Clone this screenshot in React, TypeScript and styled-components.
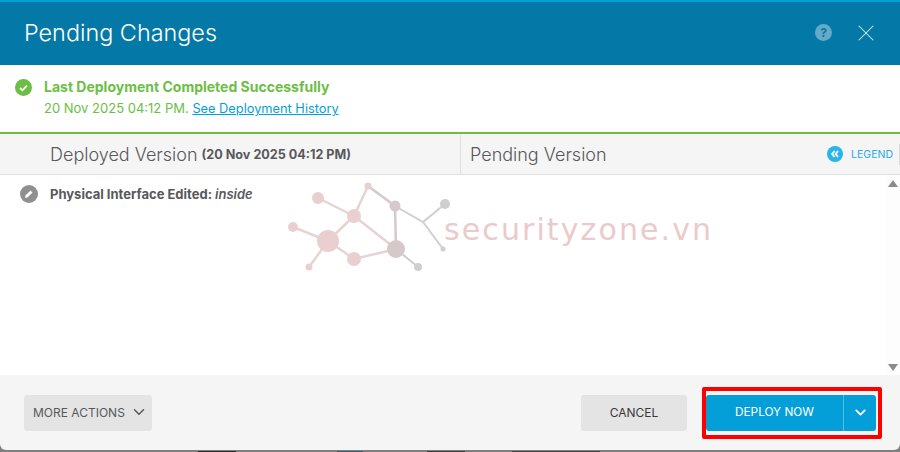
import React from 'react';
import styled, { createGlobalStyle } from 'styled-components';
import { ChevronDown, X } from 'lucide-react';

const Global = createGlobalStyle`
  html, body {
    margin: 0;
    padding: 0;
    background: #fff;
    overflow: hidden;
  }
`;

const Modal = styled.div`
  width: 900px;
  height: 452px;
  display: flex;
  flex-direction: column;
  font-family: Inter, "Liberation Sans", sans-serif;
  background: #7f7f7f;
  overflow: hidden;
`;

const Header = styled.header`
  height: 65px;
  flex: none;
  box-sizing: border-box;
  border-top: 2px solid #049fd9;
  background: #0479a8;
  display: flex;
  align-items: center;
  padding: 0 20px 2px 24px;
  color: #fff;
`;

const Title = styled.h1`
  flex: 1;
  margin: 0;
  font-size: 23.4px;
  font-weight: 300;
`;

const HelpIcon = styled.span`
  width: 17px;
  height: 17px;
  border-radius: 50%;
  background: #66a9c9;
  color: #0479a8;
  font-size: 12px;
  font-weight: 700;
  display: flex;
  align-items: center;
  justify-content: center;
  margin-right: 20px;
`;

const Status = styled.section`
  height: 69px;
  flex: none;
  box-sizing: border-box;
  padding: 12px 0 0 15px;
  display: flex;
  gap: 12px;
  background: #fff;
  border-bottom: 2px solid #6cbe45;
`;

const StatusIcon = styled.svg`
  margin-top: 2px;
  flex: none;
`;

const StatusText = styled.div`
  color: #6cbe45;
  font-size: 13px;
  line-height: 20px;
`;

const StatusTitle = styled.div`
  font-size: 14px;
  font-weight: 700;
  margin-bottom: 1px;
`;

const HistoryLink = styled.a`
  color: #049fd9;
  font-size: 12.8px;
  text-decoration: underline;
`;

const Versions = styled.div`
  height: 41px;
  flex: none;
  box-sizing: border-box;
  display: flex;
  background: #f5f5f5;
  border-bottom: 1px solid #dfdfdf;
  color: #58585b;
`;

const VersionCell = styled.div<{ $width: number; $pad: number }>`
  width: ${({ $width }) => $width}px;
  box-sizing: border-box;
  padding-left: ${({ $pad }) => $pad}px;
  display: flex;
  align-items: center;
  gap: 4px;
  font-size: 18px;
  font-weight: 300;
`;

const VersionDate = styled.span`
  font-size: 12.6px;
  font-weight: 700;
`;

const PendingCell = styled(VersionCell)`
  flex: 1;
  border-left: 1px solid #dfdfdf;
`;

const LegendToggle = styled.span`
  margin-left: auto;
  display: flex;
  align-items: center;
  gap: 8px;
  height: 21px;
  padding-right: 6px;
  border-right: 1px solid #dcdcdc;
  color: #29abe2;
  font-size: 10.5px;
  font-weight: 400;
`;

const LegendDot = styled.span`
  width: 16px;
  height: 16px;
  border-radius: 50%;
  background: #29b5e8;
  display: flex;
  align-items: center;
  justify-content: center;
`;

const Content = styled.main`
  position: relative;
  flex: 1;
  display: flex;
  background: #fff;
`;

const ChangeList = styled.div`
  flex: 1;
  padding: 10px 0 0 20px;
`;

const ChangeRow = styled.div`
  display: flex;
  align-items: center;
  gap: 12px;
  color: #58585b;
  font-size: 13px;
  font-weight: 700;
`;

const ChangeName = styled.em`
  font-weight: 600;
`;

const Scrollbar = styled.div`
  width: 15px;
  background: #fdfdfd;
  display: flex;
  flex-direction: column;
  justify-content: space-between;
  align-items: center;
  padding: 5px 0 4px;
`;

const Watermark = styled.div`
  position: absolute;
  left: 285px;
  top: 5px;
  display: flex;
  align-items: center;
  pointer-events: none;
`;

const WatermarkText = styled.span`
  margin: -2px 0 0 -11px;
  color: #ebcacb;
  font-family: "DejaVu Sans", sans-serif;
  font-size: 30px;
  letter-spacing: 2.1px;
`;

const Footer = styled.footer`
  height: 75px;
  flex: none;
  box-sizing: border-box;
  background: #f5f5f5;
  border-radius: 0 0 6px 6px;
  display: flex;
  align-items: flex-start;
  padding: 20px 24px 0;
  gap: 15px;
`;

const Button = styled.button`
  height: 36px;
  border: none;
  border-radius: 3px;
  background: #e4e4e4;
  color: #58585b;
  font-family: inherit;
  font-size: 12px;
  display: flex;
  align-items: center;
  justify-content: center;
  padding: 0 0 2px;
`;

const MoreButton = styled(Button)`
  width: 128px;
  gap: 5px;
  justify-content: flex-start;
  padding-left: 9px;
  margin-right: auto;
`;

const CancelButton = styled(Button)`
  width: 106px;
  color: #39393b;
`;

const Highlight = styled.div`
  display: flex;
  margin: -8px -6px 0 0;
  padding: 4px 2px 4px 0;
  border: 4px solid #ff0000;
  border-radius: 2px;
`;

const DeployButton = styled(Button)`
  width: 137px;
  background: #049fd9;
  color: #fff;
  font-size: 11.8px;
  border-radius: 3px 0 0 3px;
`;

const DeployCaret = styled(Button)`
  width: 33px;
  background: #049fd9;
  color: #fff;
  border-left: 1px solid #4fbde6;
  border-radius: 0 3px 3px 0;
`;

// the page behind the dialog, only its last pixels show under the footer
const PageEdge = styled.div`
  height: 2px;
  flex: none;
  display: flex;
  align-items: flex-end;
`;

const PageSliver = styled.span<{ $left: number; $width: number; $color: string }>`
  margin-left: ${({ $left }) => $left}px;
  width: ${({ $width }) => $width}px;
  height: 1px;
  background: ${({ $color }) => $color};
`;

const Triangle = ({ down }: { down?: boolean }) => (
  <svg width="10" height="7" viewBox="0 0 10 7">
    <path d={down ? 'M0 0h10L5 7z' : 'M0 7h10L5 0z'} fill="#8a8a8a" />
  </svg>
);

const NetworkMark = () => {
  const pink = '#e9cfd0';
  const pinkLine = '#e6d3d3';
  const grey = '#cfcfcf';
  const mid = '#d5c9ca';
  return (
    <svg width="170" height="100" viewBox="0 0 170 100">
      <g stroke={pinkLine} strokeWidth="2.5" fill="none">
        <path d="M33 18L69 36" />
        <path d="M8 47L43 61" />
        <path d="M43 61L69 36L83 6" />
        <path d="M43 61L24 87" />
        <path d="M43 61L69 79L111 69" />
        <path d="M69 36L111 69" />
      </g>
      <g stroke={mid} strokeWidth="2.5" fill="none">
        <path d="M83 6L110 26L111 69" />
      </g>
      <g stroke={grey} strokeWidth="2" fill="none">
        <path d="M110 26L138 42L160 24" />
        <path d="M138 42L158 69" />
        <path d="M111 69L133 87" />
      </g>
      <g fill={pink}>
        <circle cx="33" cy="18" r="6" />
        <circle cx="8" cy="47" r="5" />
        <circle cx="43" cy="61" r="11" />
        <circle cx="24" cy="87" r="3.5" />
        <circle cx="69" cy="36" r="7" />
        <circle cx="69" cy="79" r="7" />
        <circle cx="83" cy="6" r="3.5" />
      </g>
      <g fill={mid}>
        <circle cx="110" cy="26" r="5.5" />
        <circle cx="111" cy="69" r="9" />
      </g>
      <g fill={grey}>
        <circle cx="133" cy="87" r="4" />
        <circle cx="160" cy="24" r="5" />
        <circle cx="158" cy="69" r="2.5" />
      </g>
    </svg>
  );
};

const App = () => (
  <>
    <Global />
    <Modal>
      <Header>
        <Title>Pending Changes</Title>
        <HelpIcon>?</HelpIcon>
        <X size={28} strokeWidth={0.9} color="#d5e8f0" />
      </Header>
      <Status>
        <StatusIcon width="17" height="17" viewBox="0 0 17 17">
          <circle cx="8.5" cy="8.5" r="8.5" fill="#6cbe45" />
          <path d="M5 9l2.5 2.3L12 6.5" stroke="#fff" strokeWidth="1.8" fill="none" />
        </StatusIcon>
        <StatusText>
          <StatusTitle>Last Deployment Completed Successfully</StatusTitle>
          <div>
            20 Nov 2025 04:12 PM. <HistoryLink>See Deployment History</HistoryLink>
          </div>
        </StatusText>
      </Status>
      <Versions>
        <VersionCell $width={460} $pad={50}>
          Deployed Version <VersionDate>(20 Nov 2025 04:12 PM)</VersionDate>
        </VersionCell>
        <PendingCell $width={440} $pad={9}>
          Pending Version
          <LegendToggle>
            <LegendDot>
              <svg width="8" height="8" viewBox="0 0 8 8">
                <path d="M3.6 1L1.2 4l2.4 3M7 1L4.6 4 7 7" stroke="#fff" strokeWidth="1.9" fill="none" />
              </svg>
            </LegendDot>
            LEGEND
          </LegendToggle>
        </PendingCell>
      </Versions>
      <Content>
        <ChangeList>
          <ChangeRow>
            <svg width="18" height="18" viewBox="0 0 18 18">
              <circle cx="9" cy="9" r="9" fill="#8f8f8f" />
              <path d="M5 13l.7-2.7 4.8-4.8 2 2-4.8 4.8z" fill="#fff" />
            </svg>
            <span>
              Physical Interface Edited: <ChangeName>inside</ChangeName>
            </span>
          </ChangeRow>
        </ChangeList>
        <Scrollbar>
          <Triangle />
          <Triangle down />
        </Scrollbar>
        <Watermark>
          <NetworkMark />
          <WatermarkText>securityzone.vn</WatermarkText>
        </Watermark>
      </Content>
      <Footer>
        <MoreButton>
          MORE ACTIONS
          <ChevronDown size={18} />
        </MoreButton>
        <CancelButton>CANCEL</CancelButton>
        <Highlight>
          <DeployButton>DEPLOY NOW</DeployButton>
          <DeployCaret>
            <ChevronDown size={17} strokeWidth={2.5} />
          </DeployCaret>
        </Highlight>
      </Footer>
      <PageEdge>
        <PageSliver $left={198} $width={38} $color="#2b2b2b" />
        <PageSliver $left={101} $width={26} $color="#2f6278" />
        <PageSliver $left={64} $width={38} $color="#3c3c3c" />
        <PageSliver $left={47} $width={88} $color="#444444" />
      </PageEdge>
    </Modal>
  </>
);

export default App;
